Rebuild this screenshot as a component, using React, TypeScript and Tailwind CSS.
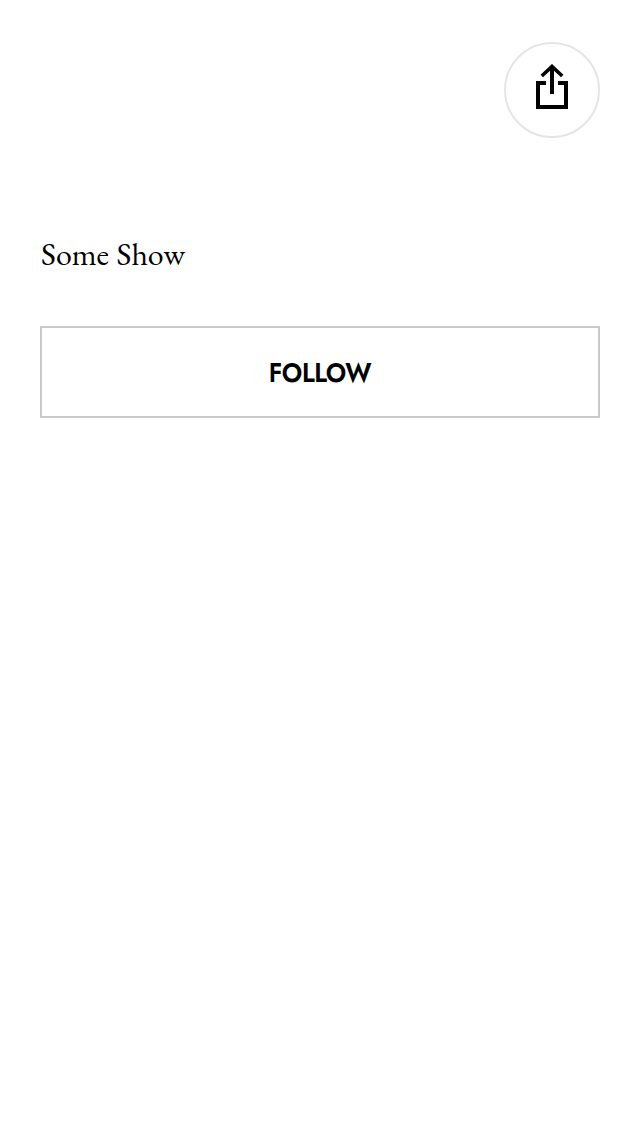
function ShareIcon() {
  return (
    <svg width="32" height="46" viewBox="0 0 32 46" fill="none" stroke="#000" strokeWidth="4" aria-hidden="true">
      <path d="M10 19H2V43H30V19H22" />
      <path d="M16 30V3" />
      <path d="M5.8 12L16 2.4L26.2 12" strokeWidth="3.6" />
    </svg>
  );
}

export default function App() {
  return (
    <main className="flex min-h-screen flex-col bg-white px-10 pt-[42px] text-black">
      <header className="flex justify-end">
        <button
          aria-label="Share"
          className="flex size-24 items-start justify-center rounded-full border-2 border-[#e5e5e5] pt-5"
        >
          <ShareIcon />
        </button>
      </header>
      <h1 className="mt-[95px] h-11 pl-px font-['EB_Garamond','Liberation_Serif',serif] text-[32px] leading-[43px] [word-spacing:1px] whitespace-nowrap">
        Some Show
      </h1>
      <button className="mt-[49px] flex h-[92px] w-full items-center justify-center border-2 border-[#c9c9c9] pt-0.5 font-['Jost','Lato',sans-serif] text-[28px] font-semibold">
        <span className="scale-x-[0.9] tracking-[-0.4px]">FOLLOW</span>
      </button>
    </main>
  );
}
